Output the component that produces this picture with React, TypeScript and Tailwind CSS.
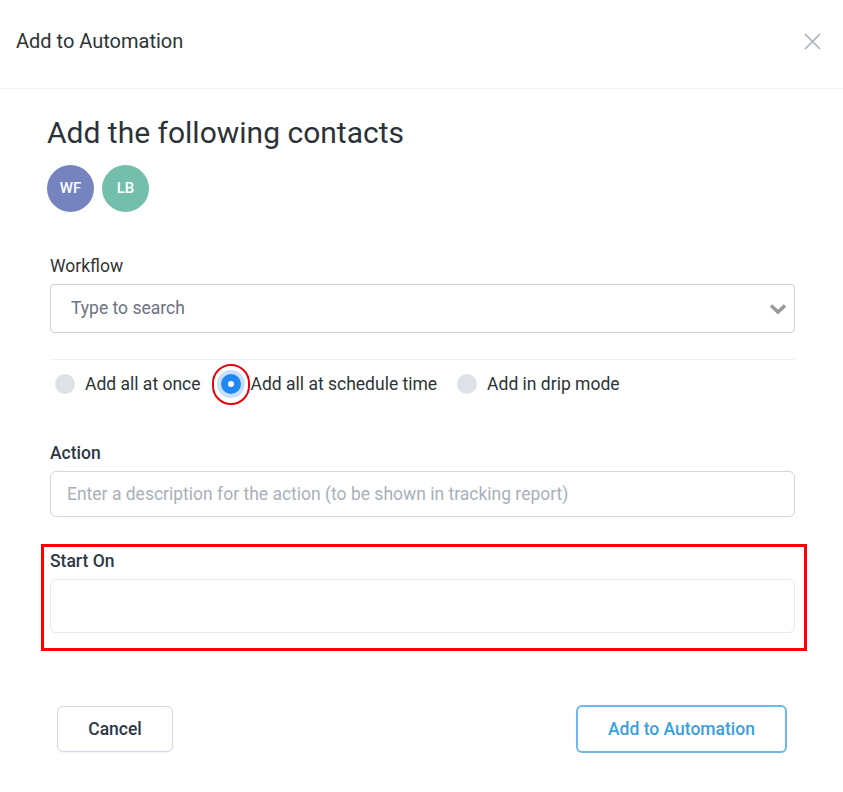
const contacts = [
  { initials: "WF", color: "bg-[#7584bf]" },
  { initials: "LB", color: "bg-[#74bfac]" },
];

const modes = [
  { label: "Add all at once", checked: false },
  { label: "Add all at schedule time", checked: true },
  { label: "Add in drip mode", checked: false },
];

export default function App() {
  return (
    <div className="min-h-[792px] w-[843px] bg-white font-['Roboto',sans-serif] text-[#2d3436]">
      {/* Header */}
      <div className="flex h-[89px] items-start justify-between border-b border-[#eff3f6] pl-4 pr-[22px] pt-[29px]">
        <h1 className="text-[20px] leading-6 text-[#2d3436]">Add to Automation</h1>
        <button className="mt-1 text-[#a9b2b8]">
          <svg width="17" height="17" viewBox="0 0 17 17" fill="none" stroke="currentColor" strokeWidth="1.6">
            <path d="M1 1L16 16M16 1L1 16" />
          </svg>
        </button>
      </div>

      {/* Contacts */}
      <div className="pl-[47px] pt-[26px]">
        <h2 className="text-[30px] leading-9 text-[#2c3338]">Add the following contacts</h2>
        <div className="mt-[14px] flex gap-2">
          {contacts.map((c) => (
            <div
              key={c.initials}
              className={`flex h-[47px] w-[47px] items-center justify-center rounded-full ${c.color} text-[15px] font-medium text-white`}
            >
              {c.initials}
            </div>
          ))}
        </div>
      </div>

      {/* Form */}
      <div className="ml-[50px] mr-[48px] pt-[44px]">
        <label className="block text-[17.5px] leading-5 text-[#333]">Workflow</label>
        <div className="mt-2 flex h-[49px] items-center justify-between rounded-[4px] border border-[#d0d0d8] pl-5 pr-[7px]">
          <span className="text-[17.5px] text-[#6b7280]">Type to search</span>
          <svg width="18" height="12" viewBox="0 0 18 12" fill="none" stroke="#9a9a9a" strokeWidth="3.6">
            <path d="M2 2.5L9 9L16 2.5" />
          </svg>
        </div>

        <div className="mt-[26px] border-t border-[#f0f0f2]" />

        <div className="flex items-center gap-5 pl-[5px] pt-3">
          {modes.map((m) => (
            <label key={m.label} className="flex items-center gap-[10px] text-[17.5px] leading-6 text-[#2d3436]">
              {m.checked ? (
                <span className="relative flex h-5 w-5 items-center justify-center rounded-full bg-[#1e88f0] shadow-[0_0_0_4px_#c6e0fb]">
                  <span className="h-[6px] w-[6px] rounded-full bg-white" />
                  <span className="absolute left-[-9px] top-[-10px] h-[41px] w-[38px] rounded-full border-2 border-[#e8000b]" />
                </span>
              ) : (
                <span className="h-5 w-5 rounded-full bg-[#dee1e7]" />
              )}
              {m.label}
            </label>
          ))}
        </div>

        <label className="mt-[47px] block text-[17.5px] font-medium leading-5 text-[#2d3748]">Action</label>
        <div className="mt-2 flex h-[46px] items-center rounded-[6px] border border-[#d3d6de] px-4">
          <span className="text-[17.5px] text-[#a9b0b9]">
            Enter a description for the action (to be shown in tracking report)
          </span>
        </div>
      </div>

      {/* Start On (highlighted) */}
      <div className="ml-[41px] mr-[36px] mt-[27px] h-[107px] border-[3px] border-[#ff0000] pl-[6px] pr-[9px] pt-[4px]">
        <label className="block text-[17.5px] font-medium leading-5 text-[#2d3748]">Start On</label>
        <div className="mt-2 h-[54px] rounded-[6px] border border-[#e8e8ee]" />
      </div>

      {/* Footer */}
      <div className="ml-[57px] mr-[56px] mt-[54px] flex items-center justify-between">
        <button className="h-[46px] w-[116px] rounded-[6px] border border-[#d6d5e2] text-[17.5px] font-medium text-[#2d3748] shadow-[0_1px_2px_rgba(0,0,0,0.06)]">
          Cancel
        </button>
        <button className="h-[48px] w-[211px] rounded-[6px] border-2 border-[#6cb8e8] text-[17.5px] font-medium text-[#3a9fe0]">
          Add to Automation
        </button>
      </div>
    </div>
  );
}
